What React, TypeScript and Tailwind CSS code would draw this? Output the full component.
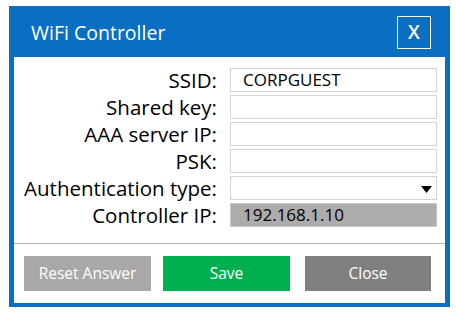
import React from "react";

const font = { fontFamily: '"Open Sans", "Noto Sans", sans-serif' };

function Field({ label, value, gray, dropdown }: { label: string; value?: string; gray?: boolean; dropdown?: boolean }) {
  return (
    <div className="flex items-center h-[24px]">
      <div className="w-[203px] text-right text-[20.5px] leading-none text-black whitespace-nowrap">{label}</div>
      <div
        className={`ml-[13px] w-[207px] h-[24px] border flex items-center pl-[12px] text-[17px] text-black relative ${
          gray ? "bg-[#aeabab] border-[#c8c8c8]" : "bg-white border-[#d4d4d4]"
        }`}
      >
        {value}
        {dropdown && (
          <svg className="absolute right-[4px] top-[9px]" width="11" height="7" viewBox="0 0 11 7">
            <polygon points="0,0 11,0 5.5,7" fill="#000" />
          </svg>
        )}
      </div>
    </div>
  );
}

export default function App() {
  return (
    <div className="w-[456px] h-[322px] bg-white pt-[6px] pl-[9px]" style={font}>
      <div className="w-[441px] h-[301px] bg-[#0a6fc2] flex flex-col pl-[5px] pr-[5px] pb-[4px]">
        <div className="h-[51px] flex items-center justify-between pl-[17px] pr-[14px]">
          <div className="text-white text-[19.5px] leading-none mt-[3px]">WiFi Controller</div>
          <div className="w-[34px] h-[33px] border border-white flex items-center justify-center text-white text-[19px] font-semibold leading-none mt-[2px]">
            X
          </div>
        </div>
        <div className="flex-1 bg-white flex flex-col">
          <div className="pt-[11px] flex flex-col gap-[3px]">
            <Field label="SSID:" value="CORPGUEST" />
            <Field label="Shared key:" />
            <Field label="AAA server IP:" />
            <Field label="PSK:" />
            <Field label="Authentication type:" dropdown />
            <Field label="Controller IP:" value="192.168.1.10" gray />
          </div>
          <div className="mt-[16px] h-[1px] bg-[#b4b4b4]" />
          <div className="flex mt-[12px] pl-[10px] h-[35px]">
            <div className="w-[127px] h-full bg-[#a9a7a7] text-white text-[15.5px] flex items-center justify-center">Reset Answer</div>
            <div className="ml-[12px] w-[127px] h-full bg-[#00b050] text-white text-[15.5px] flex items-center justify-center">Save</div>
            <div className="ml-[15px] w-[126px] h-full bg-[#808080] text-white text-[15.5px] flex items-center justify-center">Close</div>
          </div>
        </div>
      </div>
    </div>
  );
}
